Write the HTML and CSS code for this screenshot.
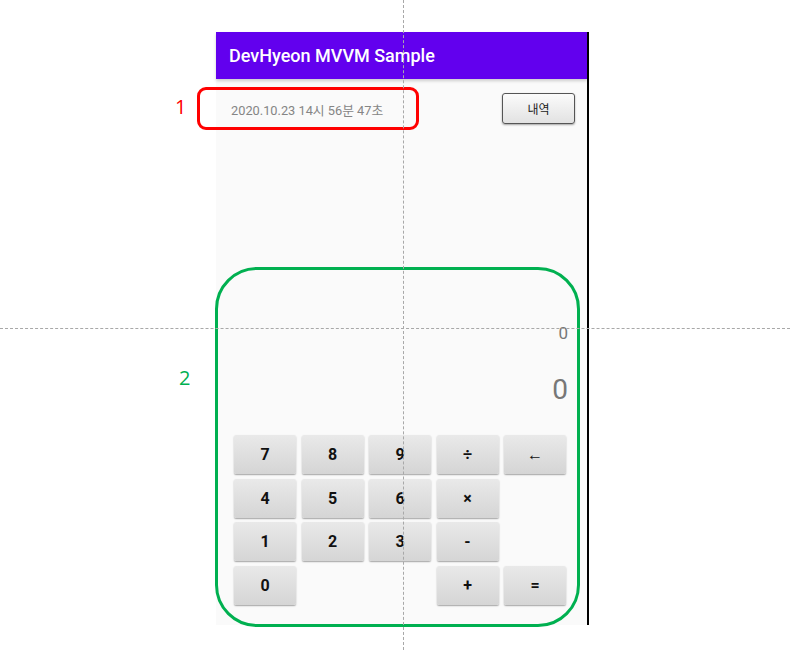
FILE: index.html
```html
<!DOCTYPE html>
<html lang="ko">
<head>
<meta charset="utf-8">
<link rel="stylesheet" href="styles.css">
</head>
<body>
<div class="stage">
  <div class="phone">
    <div class="appbar">DevHyeon MVVM Sample</div>
    <div class="content">
      <div class="toprow">
        <span class="date">2020.10.23 14시 56분 47초</span>
        <button class="hist">내역</button>
      </div>
      <div class="display">
        <div class="expr">0</div>
        <div class="result">0</div>
      </div>
      <div class="keypad">
        <button class="key">7</button>
        <button class="key">8</button>
        <button class="key">9</button>
        <button class="key">÷</button>
        <button class="key">←</button>
        <button class="key">4</button>
        <button class="key">5</button>
        <button class="key">6</button>
        <button class="key">×</button>
        <span></span>
        <button class="key">1</button>
        <button class="key">2</button>
        <button class="key">3</button>
        <button class="key">-</button>
        <span></span>
        <button class="key">0</button>
        <span></span>
        <span></span>
        <button class="key">+</button>
        <button class="key">=</button>
      </div>
    </div>
  </div>
  <div class="mark mark1"></div>
  <div class="label label1">1</div>
  <div class="mark mark2"></div>
  <div class="label label2">2</div>
  <div class="vline"></div>
  <div class="hline"></div>
</div>
</body>
</html>
```
FILE: styles.css
```css
* { box-sizing: border-box; }
html, body { margin: 0; padding: 0; background: #fff; }
.stage {
  position: relative;
  width: 790px;
  height: 650px;
  overflow: hidden;
  padding: 32px 0 0 216px;
}
.phone {
  width: 373px;
  height: 593px;
  background: #fafafa;
  border-right: 2px solid #000;
  display: flex;
  flex-direction: column;
}
.appbar {
  height: 47px;
  background: #6200ee;
  color: #fff;
  font-family: Roboto, "Noto Sans", sans-serif;
  font-weight: 500;
  font-size: 18px;
  line-height: 47px;
  padding-left: 13px;
  box-shadow: 0 2px 3px rgba(0,0,0,0.18);
  position: relative;
}
.content { flex: 1; display: flex; flex-direction: column; }
.toprow {
  display: flex;
  justify-content: space-between;
  align-items: flex-start;
  padding: 14px 12px 0 15px;
  height: 190px;
}
.date {
  font-family: Roboto, "Noto Sans CJK KR", sans-serif;
  font-size: 12.8px;
  color: #858585;
  margin-top: 7px;
}
.hist {
  width: 73px;
  height: 31px;
  border: 1px solid #555;
  border-radius: 3px;
  background: linear-gradient(#fbfbfb, #e2e2e2);
  box-shadow: 0 1px 2px rgba(0,0,0,0.35);
  font-family: Roboto, "Noto Sans CJK KR", sans-serif;
  font-size: 12px;
  color: #222;
  padding: 0;
}
.display {
  height: 166px;
  padding: 54px 19px 0 0;
  text-align: right;
  font-family: Roboto, "Noto Sans", sans-serif;
  color: #777;
}
.expr { font-size: 17px; line-height: 20px; }
.result { font-size: 28px; line-height: 32px; margin-top: 31px; }
.keypad {
  display: grid;
  grid-template-columns: repeat(5, 62px);
  grid-auto-rows: 39px;
  column-gap: 5.5px;
  row-gap: 4.7px;
  padding-left: 18px;
}
.key {
  border: none;
  border-radius: 2px;
  background: linear-gradient(#e9e9e9, #d5d5d5);
  box-shadow: 0 1px 1.5px rgba(0,0,0,0.35);
  font-family: Roboto, "Noto Sans", sans-serif;
  font-weight: 700;
  font-size: 16px;
  color: #111;
  padding: 0;
}
.mark {
  position: absolute;
  border-style: solid;
  border-width: 3px;
}
.mark1 {
  left: 197px; top: 87px; width: 222px; height: 43px;
  border-color: #ff0000;
  border-radius: 9px;
}
.mark2 {
  left: 215px; top: 267px; width: 365px; height: 360px;
  border-color: #00b050;
  border-radius: 42px;
}
.label {
  position: absolute;
  font-family: "Open Sans", "Noto Sans", sans-serif;
  font-size: 20px;
  line-height: 24px;
}
.label1 { left: 175px; top: 95px; color: #ff0000; }
.label2 { left: 179px; top: 366px; color: #00b050; }
.vline {
  position: absolute;
  left: 403px; top: 0;
  width: 0; height: 650px;
  border-left: 1px dashed #a8a8a8;
}
.hline {
  position: absolute;
  left: 0; top: 328px;
  width: 790px; height: 0;
  border-top: 1px dashed #a8a8a8;
}
```
